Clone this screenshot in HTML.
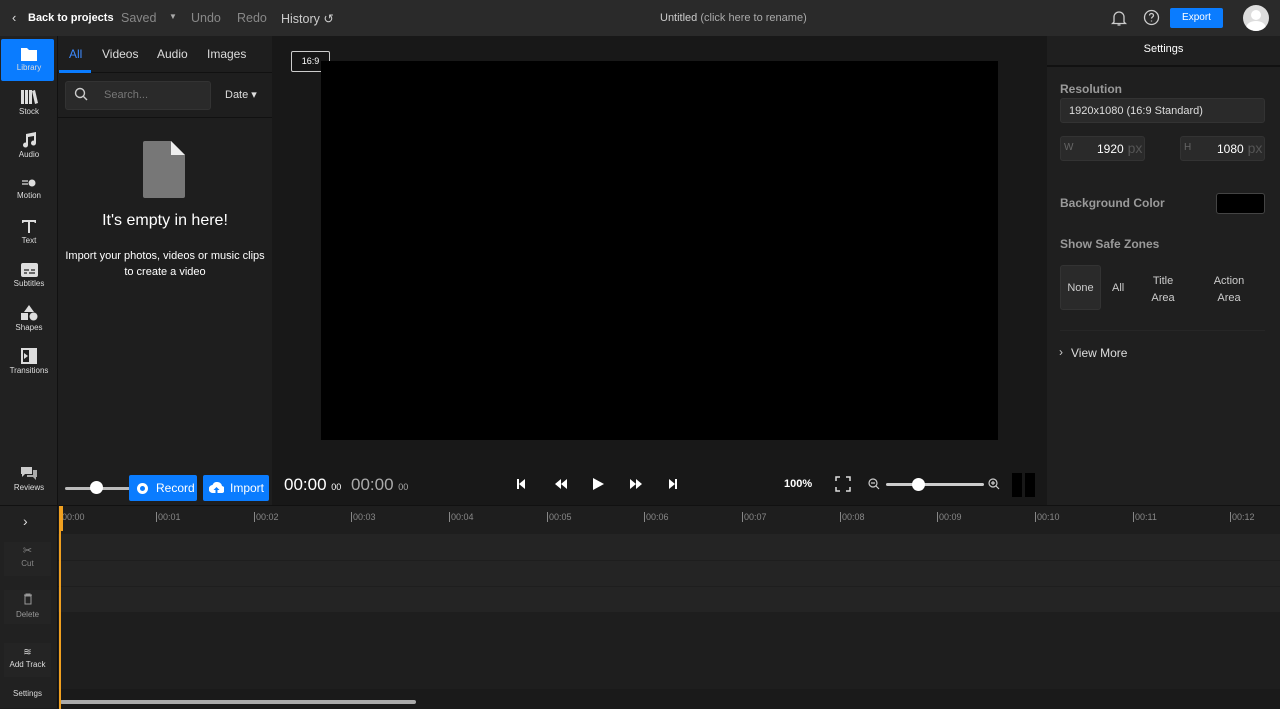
<!DOCTYPE html><html><head><meta charset="utf-8"><style>
*{box-sizing:border-box;margin:0;padding:0}
body{width:1280px;height:708px;background:#1c1c1c;font-family:"Liberation Sans",sans-serif;color:#fff;position:relative;overflow:hidden;font-size:12px}
.a{position:absolute}
.top{left:0;top:0;width:1280px;height:36px;background:#2a2a2a}
.side{left:0;top:36px;width:58px;height:469px;background:#212121;border-right:1px solid #111}
.si{position:absolute;left:0;width:58px;text-align:center;font-size:8px;color:#ddd;line-height:10px}
.si svg{display:block;margin:0 auto 2px}
.lib{left:58px;top:36px;width:214px;height:469px;background:#1e1e1e}
.prev{left:272px;top:36px;width:775px;height:469px;background:#181818}
.right{left:1047px;top:36px;width:233px;height:469px;background:#1f1f1f}
.gl{color:#9a9a9a;font-weight:bold;font-size:12px}
.btn{background:#0a7cff;color:#fff;font-size:12px;border-radius:2px}
.tl{left:58px;top:505px;width:1222px;height:203px;background:#1e1e1e;border-top:1px solid #111}
.tick{position:absolute;top:6px;font-size:9px;color:#888;border-left:1px solid #888;padding-left:1px;height:10px;line-height:10px}
</style></head><body>
<div class="a top"></div>
<div class="a" style="left:12px;top:10px;font-size:13px;color:#ddd">&#8249;</div>
<div class="a" style="left:28px;top:12px;font-size:11px;font-weight:bold">Back to projects</div>
<div class="a" style="left:121px;top:11px;font-size:12.5px;color:#888">Saved</div>
<div class="a" style="left:169px;top:12px;font-size:8px;color:#aaa">▼</div>
<div class="a" style="left:191px;top:11px;font-size:12.5px;color:#888">Undo</div>
<div class="a" style="left:237px;top:11px;font-size:12.5px;color:#888">Redo</div>
<div class="a" style="left:281px;top:11px;font-size:12.5px;color:#ccc">History ↺</div>
<div class="a" style="left:660px;top:12px;font-size:11px;color:#ccc">Untitled <span style="color:#aaa">(click here to rename)</span></div>
<svg class="a" style="left:1111px;top:9px" width="16" height="18" viewBox="0 0 16 18" fill="none" stroke="#ccc" stroke-width="1.3"><path d="M3 13V8a5 5 0 0110 0v5l1.5 1.5h-13z M6.5 16h3"/></svg>
<svg class="a" style="left:1143px;top:9px" width="17" height="17" viewBox="0 0 17 17" fill="none" stroke="#ccc" stroke-width="1.3"><circle cx="8.5" cy="8.5" r="7"/><path d="M6.5 6.5a2 2 0 114 0c0 1.5-2 1.5-2 3M8.5 11.5v1"/></svg>
<div class="a btn" style="left:1170px;top:8px;width:53px;height:20px;font-size:10px;text-align:center;line-height:20px">Export</div>
<div class="a" style="left:1243px;top:5px;width:26px;height:26px;border-radius:50%;background:#ddd;overflow:hidden"><div class="a" style="left:8px;top:5px;width:10px;height:10px;border-radius:50%;background:#fff"></div><div class="a" style="left:3px;top:16px;width:20px;height:14px;border-radius:50%;background:#fff"></div></div>

<div class="a side"></div>
<div class="a" style="left:1px;top:39px;width:53px;height:42px;background:#0a7cff;border-radius:2px"></div>
<div class="si" style="top:47px"><svg width="16" height="14"><path d="M0 1h6l2 2h8v11H0z" fill="#fff"/></svg>Library</div>
<div class="si" style="top:89px"><svg width="18" height="16"><path d="M1 1h3v14H1zM5 1h3v14H5zM9 1h3v14H9zM12 2l3-1 3 13-3 1z" fill="#ddd"/></svg>Stock</div>
<div class="si" style="top:132px"><svg width="16" height="16"><path d="M5 2l10-2v11a2.5 2.5 0 11-2-2.4V4L7 5v8a2.5 2.5 0 11-2-2.4z" fill="#ddd"/></svg>Audio</div>
<div class="si" style="top:177px"><svg width="16" height="12"><path d="M1 4h6M1 7h6" stroke="#ddd" stroke-width="1.2"/><circle cx="11" cy="6" r="3.5" fill="#ddd"/></svg>Motion</div>
<div class="si" style="top:219px"><svg width="16" height="15"><path d="M1 1h14v3h-1.5V3H9v11H7V3H2.5v1H1z" fill="#ddd"/></svg>Text</div>
<div class="si" style="top:263px"><svg width="17" height="14"><rect width="17" height="14" rx="2" fill="#ddd"/><path d="M3 7h5M10 7h4M3 10h3M8 10h6" stroke="#212121" stroke-width="1.3"/></svg>Subtitles</div>
<div class="si" style="top:305px"><svg width="18" height="16"><path d="M9 0l5 7H4z M1 8h7v7H1z" fill="#ddd"/><circle cx="13.5" cy="11.5" r="4" fill="#ddd"/></svg>Shapes</div>
<div class="si" style="top:348px"><svg width="16" height="16"><rect x="1" y="1" width="14" height="14" fill="none" stroke="#ddd" stroke-width="2"/><path d="M8 1h7v14H8z M3 5l4 3-4 3z" fill="#ddd"/></svg>Transitions</div>
<div class="si" style="top:466px"><svg width="18" height="15"><path d="M1 1h11v7H5l-3 3V8H1z" fill="#ccc"/><path d="M13 4h4v7h-1v3l-3-3H7V9h6z" fill="#aaa"/></svg>Reviews</div>

<div class="a lib"></div>
<div class="a" style="left:58px;top:72px;width:214px;height:1px;background:#111"></div>
<div class="a" style="left:59px;top:70px;width:32px;height:3px;background:#0a7cff"></div>
<div class="a" style="left:69px;top:47px;font-size:12px;color:#3d8bff">All</div>
<div class="a" style="left:102px;top:47px;font-size:12px;color:#ddd">Videos</div>
<div class="a" style="left:157px;top:47px;font-size:12px;color:#ddd">Audio</div>
<div class="a" style="left:207px;top:47px;font-size:12px;color:#ddd">Images</div>
<div class="a" style="left:65px;top:81px;width:146px;height:29px;background:#2a2a2a;border-radius:3px;border:1px solid #333"></div>
<svg class="a" style="left:74px;top:87px" width="14" height="14" fill="none" stroke="#ccc" stroke-width="1.4"><circle cx="6" cy="6" r="4.5"/><path d="M9.5 9.5l3.5 3.5"/></svg>
<div class="a" style="left:104px;top:89px;font-size:11px;color:#777">Search...</div>
<div class="a" style="left:225px;top:88px;font-size:11px;color:#ddd">Date ▾</div>
<div class="a" style="left:58px;top:117px;width:214px;height:1px;background:#111"></div>
<svg class="a" style="left:143px;top:141px" width="43" height="57"><path d="M2 0h26l14 14v41a2 2 0 01-2 2H2a2 2 0 01-2-2V2a2 2 0 012-2z" fill="#777"/><path d="M28 0l14 14H28z" fill="#eee"/></svg>
<div class="a" style="left:58px;top:212px;width:214px;text-align:center;font-size:16px">It's empty in here!</div>
<div class="a" style="left:58px;top:248px;width:214px;text-align:center;font-size:11px;line-height:16px">Import your photos, videos or music clips<br>to create a video</div>
<div class="a" style="left:65px;top:487px;width:65px;height:3px;background:#bbb;border-radius:2px"></div>
<div class="a" style="left:90px;top:481px;width:13px;height:13px;background:#fff;border-radius:50%"></div>
<div class="a btn" style="left:129px;top:475px;width:68px;height:26px;line-height:26px;padding-left:27px">Record</div>
<div class="a" style="left:137px;top:483px;width:11px;height:11px;border-radius:50%;background:#fff"></div><div class="a" style="left:140px;top:486px;width:5px;height:5px;border-radius:50%;background:#0a7cff"></div>
<div class="a btn" style="left:203px;top:475px;width:66px;height:26px;line-height:26px;padding-left:27px">Import</div>
<svg class="a" style="left:209px;top:482px" width="15" height="11"><path d="M4 11a4 4 0 01-.5-8A5 5 0 0113 4a3.5 3.5 0 01-1 7z" fill="#fff"/><path d="M7.5 5l-3 3h2v3h2V8h2z" fill="#0a7cff"/></svg>

<div class="a prev"></div>
<div class="a" style="left:291px;top:51px;width:39px;height:21px;border:1px solid #ccc;border-radius:2px;font-size:9px;text-align:center;line-height:19px;background:#151515">16:9</div>
<div class="a" style="left:321px;top:61px;width:677px;height:379px;background:#000"></div>
<div class="a" style="left:284px;top:475px;font-size:17px">00:00 <span style="font-size:9px">00</span></div>
<div class="a" style="left:351px;top:475px;font-size:17px;color:#aaa">00:00 <span style="font-size:9px">00</span></div>
<svg class="a" style="left:515px;top:477px" width="170" height="14" fill="#fff"><path d="M2 2h2v10H2zM4 7l6-5v10z"/><path d="M40 7l6-5v10zM46 7l6-5v10z"/><path d="M78 1l11 6-11 6z"/><path d="M115 2l6 5-6 5zM121 2l6 5-6 5z"/><path d="M154 2l6 5-6 5zM160 2h2v10h-2z"/></svg>
<div class="a" style="left:784px;top:478px;font-size:11px;font-weight:bold">100%</div>
<svg class="a" style="left:835px;top:476px" width="16" height="16" fill="none" stroke="#ddd" stroke-width="1.5"><path d="M1 5V1h4M11 1h4v4M15 11v4h-4M5 15H1v-4"/></svg>
<svg class="a" style="left:868px;top:478px" width="12" height="12" fill="none" stroke="#ccc" stroke-width="1.2"><circle cx="5" cy="5" r="4"/><path d="M3 5h4M8 8l3 3"/></svg>
<div class="a" style="left:886px;top:483px;width:98px;height:3px;background:#ccc;border-radius:2px"></div>
<div class="a" style="left:912px;top:478px;width:13px;height:13px;border-radius:50%;background:#fff"></div>
<svg class="a" style="left:988px;top:478px" width="12" height="12" fill="none" stroke="#ccc" stroke-width="1.2"><circle cx="5" cy="5" r="4"/><path d="M3 5h4M5 3v4M8 8l3 3"/></svg>
<div class="a" style="left:1012px;top:473px;width:10px;height:24px;background:#000"></div>
<div class="a" style="left:1025px;top:473px;width:10px;height:24px;background:#000"></div>

<div class="a right"></div>
<div class="a" style="left:1047px;top:43px;width:233px;text-align:center;font-size:11px">Settings</div>
<div class="a" style="left:1047px;top:65px;width:233px;height:2px;background:#111"></div>
<div class="a gl" style="left:1060px;top:82px">Resolution</div>
<div class="a" style="left:1060px;top:98px;width:205px;height:25px;background:#2a2a2a;border:1px solid #333;border-radius:3px;font-size:11px;padding:6px 8px;color:#ddd">1920x1080 (16:9 Standard)</div>
<div class="a" style="left:1060px;top:136px;width:85px;height:25px;background:#2a2a2a;border:1px solid #333;border-radius:3px"></div>
<div class="a" style="left:1064px;top:142px;font-size:10px;color:#666">W</div>
<div class="a" style="left:1097px;top:140px;font-size:12px">1920<span style="color:#555;font-size:14px"> px</span></div>
<div class="a" style="left:1180px;top:136px;width:85px;height:25px;background:#2a2a2a;border:1px solid #333;border-radius:3px"></div>
<div class="a" style="left:1184px;top:142px;font-size:10px;color:#666">H</div>
<div class="a" style="left:1217px;top:140px;font-size:12px">1080<span style="color:#555;font-size:14px"> px</span></div>
<div class="a gl" style="left:1060px;top:196px">Background Color</div>
<div class="a" style="left:1216px;top:193px;width:49px;height:21px;background:#000;border:1px solid #444;border-radius:3px"></div>
<div class="a gl" style="left:1060px;top:237px">Show Safe Zones</div>
<div class="a" style="left:1060px;top:265px;width:41px;height:45px;background:#2a2a2a;border:1px solid #333;border-radius:3px;font-size:11px;color:#ccc;text-align:center;line-height:45px">None</div>
<div class="a" style="left:1112px;top:282px;font-size:11px;color:#ccc">All</div>
<div class="a" style="left:1143px;top:273px;font-size:11px;color:#ccc;text-align:center;line-height:17px;width:40px">Title<br>Area</div>
<div class="a" style="left:1208px;top:273px;font-size:11px;color:#ccc;text-align:center;line-height:17px;width:42px">Action<br>Area</div>
<div class="a" style="left:1060px;top:330px;width:205px;height:1px;background:#262626"></div>
<div class="a" style="left:1059px;top:345px;font-size:12px;color:#ccc">›</div>
<div class="a" style="left:1071px;top:346px;font-size:12px;color:#ddd">View More</div>

<div class="a" style="left:0;top:505px;width:58px;height:203px;background:#212121;border-top:1px solid #111;border-right:1px solid #111"></div>
<div class="a" style="left:23px;top:513px;font-size:14px;color:#ddd">›</div>
<div class="a" style="left:4px;top:542px;width:47px;height:34px;background:#242424;text-align:center;font-size:8px;color:#888;padding-top:3px;line-height:12px"><span style="font-size:11px">✂</span><br>Cut</div>
<div class="a" style="left:4px;top:590px;width:47px;height:34px;background:#242424;text-align:center;font-size:8px;color:#999;padding-top:3px;line-height:12px"><svg width="10" height="12"><path d="M1 2h8M3 2V1h4v1M2 3h6v8H2z" fill="none" stroke="#999"/></svg><br>Delete</div>
<div class="a" style="left:4px;top:643px;width:47px;height:34px;background:#242424;text-align:center;font-size:8px;color:#ddd;padding-top:4px;line-height:12px"><span style="font-size:10px">≋</span><br>Add Track</div>
<div class="a" style="left:0;top:689px;width:55px;text-align:center;font-size:8px;color:#ddd">Settings</div>

<div class="a tl">
<div class="a" style="left:0;top:28px;width:1222px;height:26px;background:#242424"></div>
<div class="a" style="left:0;top:55px;width:1222px;height:25px;background:#242424"></div>
<div class="a" style="left:0;top:81px;width:1222px;height:25px;background:#242424"></div>
<div class="a" style="left:0;top:183px;width:1222px;height:20px;background:#1a1a1a"></div>
<div class="a" style="left:2px;top:194px;width:356px;height:4px;background:#aaa;border-radius:2px"></div>
<div class="tick" style="left:3px;border:none">00:00</div>
<div class="tick" style="left:98px">00:01</div>
<div class="tick" style="left:196px">00:02</div>
<div class="tick" style="left:293px">00:03</div>
<div class="tick" style="left:391px">00:04</div>
<div class="tick" style="left:489px">00:05</div>
<div class="tick" style="left:586px">00:06</div>
<div class="tick" style="left:684px">00:07</div>
<div class="tick" style="left:782px">00:08</div>
<div class="tick" style="left:879px">00:09</div>
<div class="tick" style="left:977px">00:10</div>
<div class="tick" style="left:1075px">00:11</div>
<div class="tick" style="left:1172px">00:12</div>
<div class="a" style="left:1px;top:0;width:2px;height:203px;background:#f0a020"></div>
<div class="a" style="left:1px;top:0;width:4px;height:25px;background:#f0a020"></div>
</div>
</body></html>
